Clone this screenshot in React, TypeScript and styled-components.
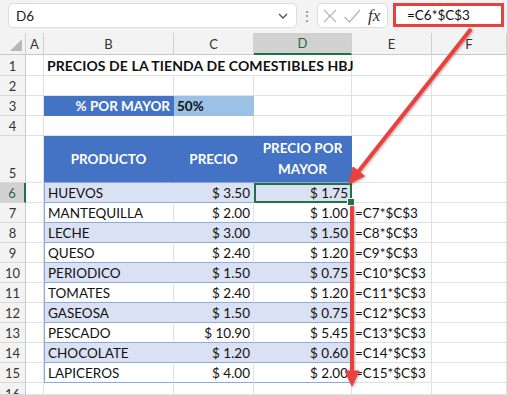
import React from "react";
import styled, { createGlobalStyle } from "styled-components";

const GlobalStyle = createGlobalStyle`
  html, body { margin: 0; padding: 0; background: #fff; }
  body { font-family: Lato, "Open Sans", "Liberation Sans", sans-serif; }
`;

const BLUE = "#4472c4";
const BAND = "#d9e1f2";
const TBORDER = "#8ea9db";
const GRID = "#e1e1e1";
const GREEN = "#217346";
const RED = "#e9403f";

const Frame = styled.div`
  position: relative;
  width: 507px;
  height: 395px;
  overflow: hidden;
  background: #fff;
`;

const Bar = styled.div`
  display: flex;
  align-items: flex-start;
  height: 33px;
  box-sizing: border-box;
  padding: 3px 3px 0 8px;
  background: #f3f3f3;
`;

const NameBox = styled.div`
  display: flex;
  align-items: center;
  justify-content: space-between;
  width: 289px;
  height: 25px;
  box-sizing: border-box;
  padding: 0 8px 0 7px;
  background: #fff;
  border: 1px solid #dcdcdc;
  border-radius: 5px;
  font-size: 13.5px;
  color: #222;
`;

const Dots = styled.div`
  width: 20px;
  text-align: center;
  line-height: 25px;
  color: #8a8a8a;
  font-size: 14px;
`;

const FxGroup = styled.div`
  display: flex;
  align-items: center;
  gap: 5px;
  width: 71px;
  height: 25px;
  box-sizing: border-box;
  padding-left: 4px;
  background: #fff;
  border: 1px solid #dcdcdc;
  border-radius: 5px;
`;

const Fx = styled.span`
  font-family: "Liberation Serif", serif;
  font-style: italic;
  font-size: 17px;
  color: #333;
  margin-left: 2px;
`;

const FormulaInput = styled.div`
  flex: 1;
  margin-left: 5px;
  height: 24px;
  box-sizing: border-box;
  padding-left: 11px;
  border: 3px solid ${RED};
  background: #fff;
  font-size: 13.5px;
  line-height: 18px;
  color: #111;
`;

const Sheet = styled.div`
  display: grid;
  grid-template-columns: 26px 18px 130px 80px 98px 80px 1fr;
  grid-template-rows: 22px 21px 20px 20px 20px 47px repeat(10, 20px) 12px;
  font-size: 13.5px;
  color: #111;
`;

const ColHead = styled.div<{ $sel?: boolean }>`
  display: flex;
  align-items: center;
  justify-content: center;
  box-sizing: border-box;
  background: ${(p) => (p.$sel ? "#d2d2d2" : "#f3f3f3")};
  color: ${(p) => (p.$sel ? "#1d6b3f" : "#333")};
  border-right: 1px solid #d0d0d0;
  border-bottom: ${(p) => (p.$sel ? `2px solid ${GREEN}` : "1px solid #c8c8c8")};
  font-size: 13px;
`;

const Corner = styled(ColHead)`
  position: relative;
  &::after {
    content: "";
    position: absolute;
    right: 3px;
    bottom: 3px;
    border-style: solid;
    border-width: 0 0 12px 12px;
    border-color: transparent transparent #b8b8b8 transparent;
  }
`;

const RowHead = styled.div<{ $sel?: boolean; $cut?: boolean }>`
  display: flex;
  align-items: ${(p) => (p.$cut ? "flex-start" : "flex-end")};
  justify-content: center;
  padding: ${(p) => (p.$cut ? "3px 0 0" : "0 0 1px")};
  overflow: hidden;
  box-sizing: border-box;
  background: ${(p) => (p.$sel ? "#d2d2d2" : "#f3f3f3")};
  color: ${(p) => (p.$sel ? "#1d6b3f" : "#333")};
  border-bottom: 1px solid #d8d8d8;
  border-right: ${(p) => (p.$sel ? `2px solid ${GREEN}` : "1px solid #c8c8c8")};
  font-size: 13px;
`;

type CellProps = {
  $fill?: string;
  $align?: "left" | "right" | "center";
  $bold?: boolean;
  $white?: boolean;
  $span?: number;
  $tb?: boolean;
  $tl?: boolean;
  $tr?: boolean;
  $sel?: boolean;
};

const Cell = styled.div<CellProps>`
  position: relative;
  display: flex;
  align-items: center;
  justify-content: ${(p) =>
    p.$align === "right" ? "flex-end" : p.$align === "center" ? "center" : "flex-start"};
  text-align: ${(p) => p.$align || "left"};
  grid-column: ${(p) => (p.$span ? `span ${p.$span}` : "auto")};
  box-sizing: border-box;
  padding: 0 3px;
  white-space: nowrap;
  background: ${(p) => p.$fill || "transparent"};
  font-weight: ${(p) => (p.$bold ? 700 : 400)};
  color: ${(p) => (p.$white ? "#fff" : "#111")};
  border-right: 1px solid ${(p) => (p.$tr ? TBORDER : p.$fill ? p.$fill : GRID)};
  border-bottom: 1px solid ${(p) => (p.$tb ? TBORDER : p.$fill ? p.$fill : GRID)};
  border-left: ${(p) => (p.$tl ? `1px solid ${TBORDER}` : "none")};
  outline: ${(p) => (p.$sel ? `2px solid ${GREEN}` : "none")};
  outline-offset: -2px;
`;

const Title = styled(Cell)`
  font-size: 14px;
  letter-spacing: 0.1px;
`;

const HeadCell = styled(Cell)`
  line-height: 21px;
  white-space: normal;
  padding: 0 2px;
`;

const FillHandle = styled.span`
  position: absolute;
  right: -4px;
  bottom: -4px;
  width: 6px;
  height: 6px;
  background: ${GREEN};
  border: 1px solid #fff;
  z-index: 2;
`;

const Overlay = styled.svg`
  position: absolute;
  left: 0;
  top: 0;
  pointer-events: none;
`;

const products: [string, string, string][] = [
  ["HUEVOS", "$ 3.50", "$ 1.75"],
  ["MANTEQUILLA", "$ 2.00", "$ 1.00"],
  ["LECHE", "$ 3.00", "$ 1.50"],
  ["QUESO", "$ 2.40", "$ 1.20"],
  ["PERIODICO", "$ 1.50", "$ 0.75"],
  ["TOMATES", "$ 2.40", "$ 1.20"],
  ["GASEOSA", "$ 1.50", "$ 0.75"],
  ["PESCADO", "$ 10.90", "$ 5.45"],
  ["CHOCOLATE", "$ 1.20", "$ 0.60"],
  ["LAPICEROS", "$ 4.00", "$ 2.00"],
];

const Blank = () => <Cell />;
const BlankRow = () => (
  <>
    {[0, 1, 2, 3, 4, 5].map((i) => (
      <Blank key={i} />
    ))}
  </>
);

export default function App() {
  return (
    <Frame>
      <GlobalStyle />
      <Bar>
        <NameBox>
          <span>D6</span>
          <svg width="10" height="6" viewBox="0 0 10 6">
            <path d="M1 1l4 4 4-4" fill="none" stroke="#555" strokeWidth="1.3" />
          </svg>
        </NameBox>
        <Dots>⋮</Dots>
        <FxGroup>
          <svg width="16" height="16" viewBox="0 0 16 16">
            <path d="M2 2l12 12M14 2L2 14" stroke="#b5b5b5" strokeWidth="1.2" />
          </svg>
          <svg width="18" height="16" viewBox="0 0 18 16">
            <path d="M1.5 9l5 5L17 2" fill="none" stroke="#b5b5b5" strokeWidth="1.2" />
          </svg>
          <Fx>fx</Fx>
        </FxGroup>
        <FormulaInput>=C6*$C$3</FormulaInput>
      </Bar>

      <Sheet>
        <Corner />
        {["A", "B", "C", "D", "E", "F"].map((c) => (
          <ColHead key={c} $sel={c === "D"}>
            {c}
          </ColHead>
        ))}

        <RowHead>1</RowHead>
        <Blank />
        <Title $span={3} $bold>
          PRECIOS DE LA TIENDA DE COMESTIBLES HBJ
        </Title>
        <Blank />
        <Blank />

        <RowHead>2</RowHead>
        <BlankRow />

        <RowHead>3</RowHead>
        <Blank />
        <Cell $fill={BLUE} $white $bold $align="right">
          % POR MAYOR
        </Cell>
        <Cell $fill="#9bc2e6" $bold>
          50%
        </Cell>
        <Blank />
        <Blank />
        <Blank />

        <RowHead>4</RowHead>
        <BlankRow />

        <RowHead>5</RowHead>
        <Blank />
        <HeadCell $fill={BLUE} $white $bold $align="center" $tb>
          PRODUCTO
        </HeadCell>
        <HeadCell $fill={BLUE} $white $bold $align="center" $tb>
          PRECIO
        </HeadCell>
        <HeadCell $fill={BLUE} $white $bold $align="center" $tb>
          PRECIO POR MAYOR
        </HeadCell>
        <Blank />
        <Blank />

        {products.map(([name, price, whole], i) => {
          const row = i + 6;
          const band = i % 2 === 0 ? BAND : undefined;
          return (
            <React.Fragment key={name}>
              <RowHead $sel={row === 6}>{row}</RowHead>
              <Blank />
              <Cell $fill={band} $tl $tb>
                {name}
              </Cell>
              <Cell $fill={band} $tb $align="right">
                {price}
              </Cell>
              <Cell $fill={band} $tb $tr $align="right" $sel={row === 6}>
                {whole}
                {row === 6 && <FillHandle />}
              </Cell>
              <Cell>{row === 6 ? "" : `=C${row}*$C$3`}</Cell>
              <Blank />
            </React.Fragment>
          );
        })}

        <RowHead $cut>16</RowHead>
        <BlankRow />
      </Sheet>

      <Overlay width="507" height="395" viewBox="0 0 507 395">
        <defs>
          <filter id="sh" x="-20%" y="-20%" width="140%" height="140%">
            <feDropShadow dx="1" dy="1" stdDeviation="1.2" floodColor="#000" floodOpacity="0.3" />
          </filter>
        </defs>
        <g filter="url(#sh)" fill={RED} stroke={RED}>
          <line x1="471" y1="29" x2="358" y2="172" strokeWidth="4" />
          <polygon points="349,184 364.5,176 353,167" strokeWidth="1" />
          <line x1="352" y1="205" x2="352" y2="372" strokeWidth="4" />
          <polygon points="345,371 359,371 352,386" strokeWidth="1" />
        </g>
      </Overlay>
    </Frame>
  );
}
